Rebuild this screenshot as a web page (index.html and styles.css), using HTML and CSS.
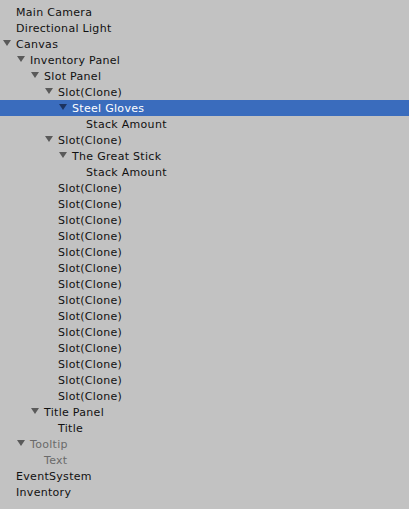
FILE: index.html
```html
<html>
<head>
<meta charset="UTF-8">
<title>Hierarchy</title>
<link rel="stylesheet" href="styles.css">
</head>
<body>
<div class="tree">
  <div class="row d0"><span class="name">Main Camera</span></div>
  <div class="row d0"><span class="name">Directional Light</span></div>
  <div class="row d0 open"><span class="fold"></span><span class="name">Canvas</span></div>
  <div class="row d1 open"><span class="fold"></span><span class="name">Inventory Panel</span></div>
  <div class="row d2 open"><span class="fold"></span><span class="name">Slot Panel</span></div>
  <div class="row d3 open"><span class="fold"></span><span class="name">Slot(Clone)</span></div>
  <div class="row d4 open selected"><span class="fold"></span><span class="name">Steel Gloves</span></div>
  <div class="row d5"><span class="name">Stack Amount</span></div>
  <div class="row d3 open"><span class="fold"></span><span class="name">Slot(Clone)</span></div>
  <div class="row d4 open"><span class="fold"></span><span class="name">The Great Stick</span></div>
  <div class="row d5"><span class="name">Stack Amount</span></div>
  <div class="row d3"><span class="name">Slot(Clone)</span></div>
  <div class="row d3"><span class="name">Slot(Clone)</span></div>
  <div class="row d3"><span class="name">Slot(Clone)</span></div>
  <div class="row d3"><span class="name">Slot(Clone)</span></div>
  <div class="row d3"><span class="name">Slot(Clone)</span></div>
  <div class="row d3"><span class="name">Slot(Clone)</span></div>
  <div class="row d3"><span class="name">Slot(Clone)</span></div>
  <div class="row d3"><span class="name">Slot(Clone)</span></div>
  <div class="row d3"><span class="name">Slot(Clone)</span></div>
  <div class="row d3"><span class="name">Slot(Clone)</span></div>
  <div class="row d3"><span class="name">Slot(Clone)</span></div>
  <div class="row d3"><span class="name">Slot(Clone)</span></div>
  <div class="row d3"><span class="name">Slot(Clone)</span></div>
  <div class="row d3"><span class="name">Slot(Clone)</span></div>
  <div class="row d2 open"><span class="fold"></span><span class="name">Title Panel</span></div>
  <div class="row d3"><span class="name">Title</span></div>
  <div class="row d1 open inactive"><span class="fold"></span><span class="name">Tooltip</span></div>
  <div class="row d2 inactive"><span class="name">Text</span></div>
  <div class="row d0"><span class="name">EventSystem</span></div>
  <div class="row d0"><span class="name">Inventory</span></div>
</div>
</body>
</html>
```
FILE: styles.css
```css
body {
	margin: 0;
	background: #c2c2c2;
	font-family: "DejaVu Sans", Verdana, sans-serif;
	font-size: 11px;
	letter-spacing: 0.3px;
	color: #111111;
}
.tree {
	padding-top: 4px;
}
.row {
	height: 16px;
	display: flex;
	align-items: flex-start;
	white-space: nowrap;
}
.name {
	line-height: 18px;
}
.d0 { padding-left: 16px; }
.d1 { padding-left: 30px; }
.d2 { padding-left: 44px; }
.d3 { padding-left: 58px; }
.d4 { padding-left: 72px; }
.d5 { padding-left: 86px; }
.open {
	position: relative;
}
.fold {
	position: absolute;
	left: 0;
	top: 4px;
	width: 0;
	height: 0;
	border-left: 4px solid transparent;
	border-right: 4px solid transparent;
	border-top: 6px solid #5a5a5a;
}
.d0 .fold { left: 3px; }
.d1 .fold { left: 17px; }
.d2 .fold { left: 31px; }
.d3 .fold { left: 45px; }
.d4 .fold { left: 59px; }
.selected {
	background: #3a6cbd;
	color: #ffffff;
}
.selected .fold {
	border-top-color: #1c3360;
}
.inactive {
	color: #6a6a6a;
}
```
